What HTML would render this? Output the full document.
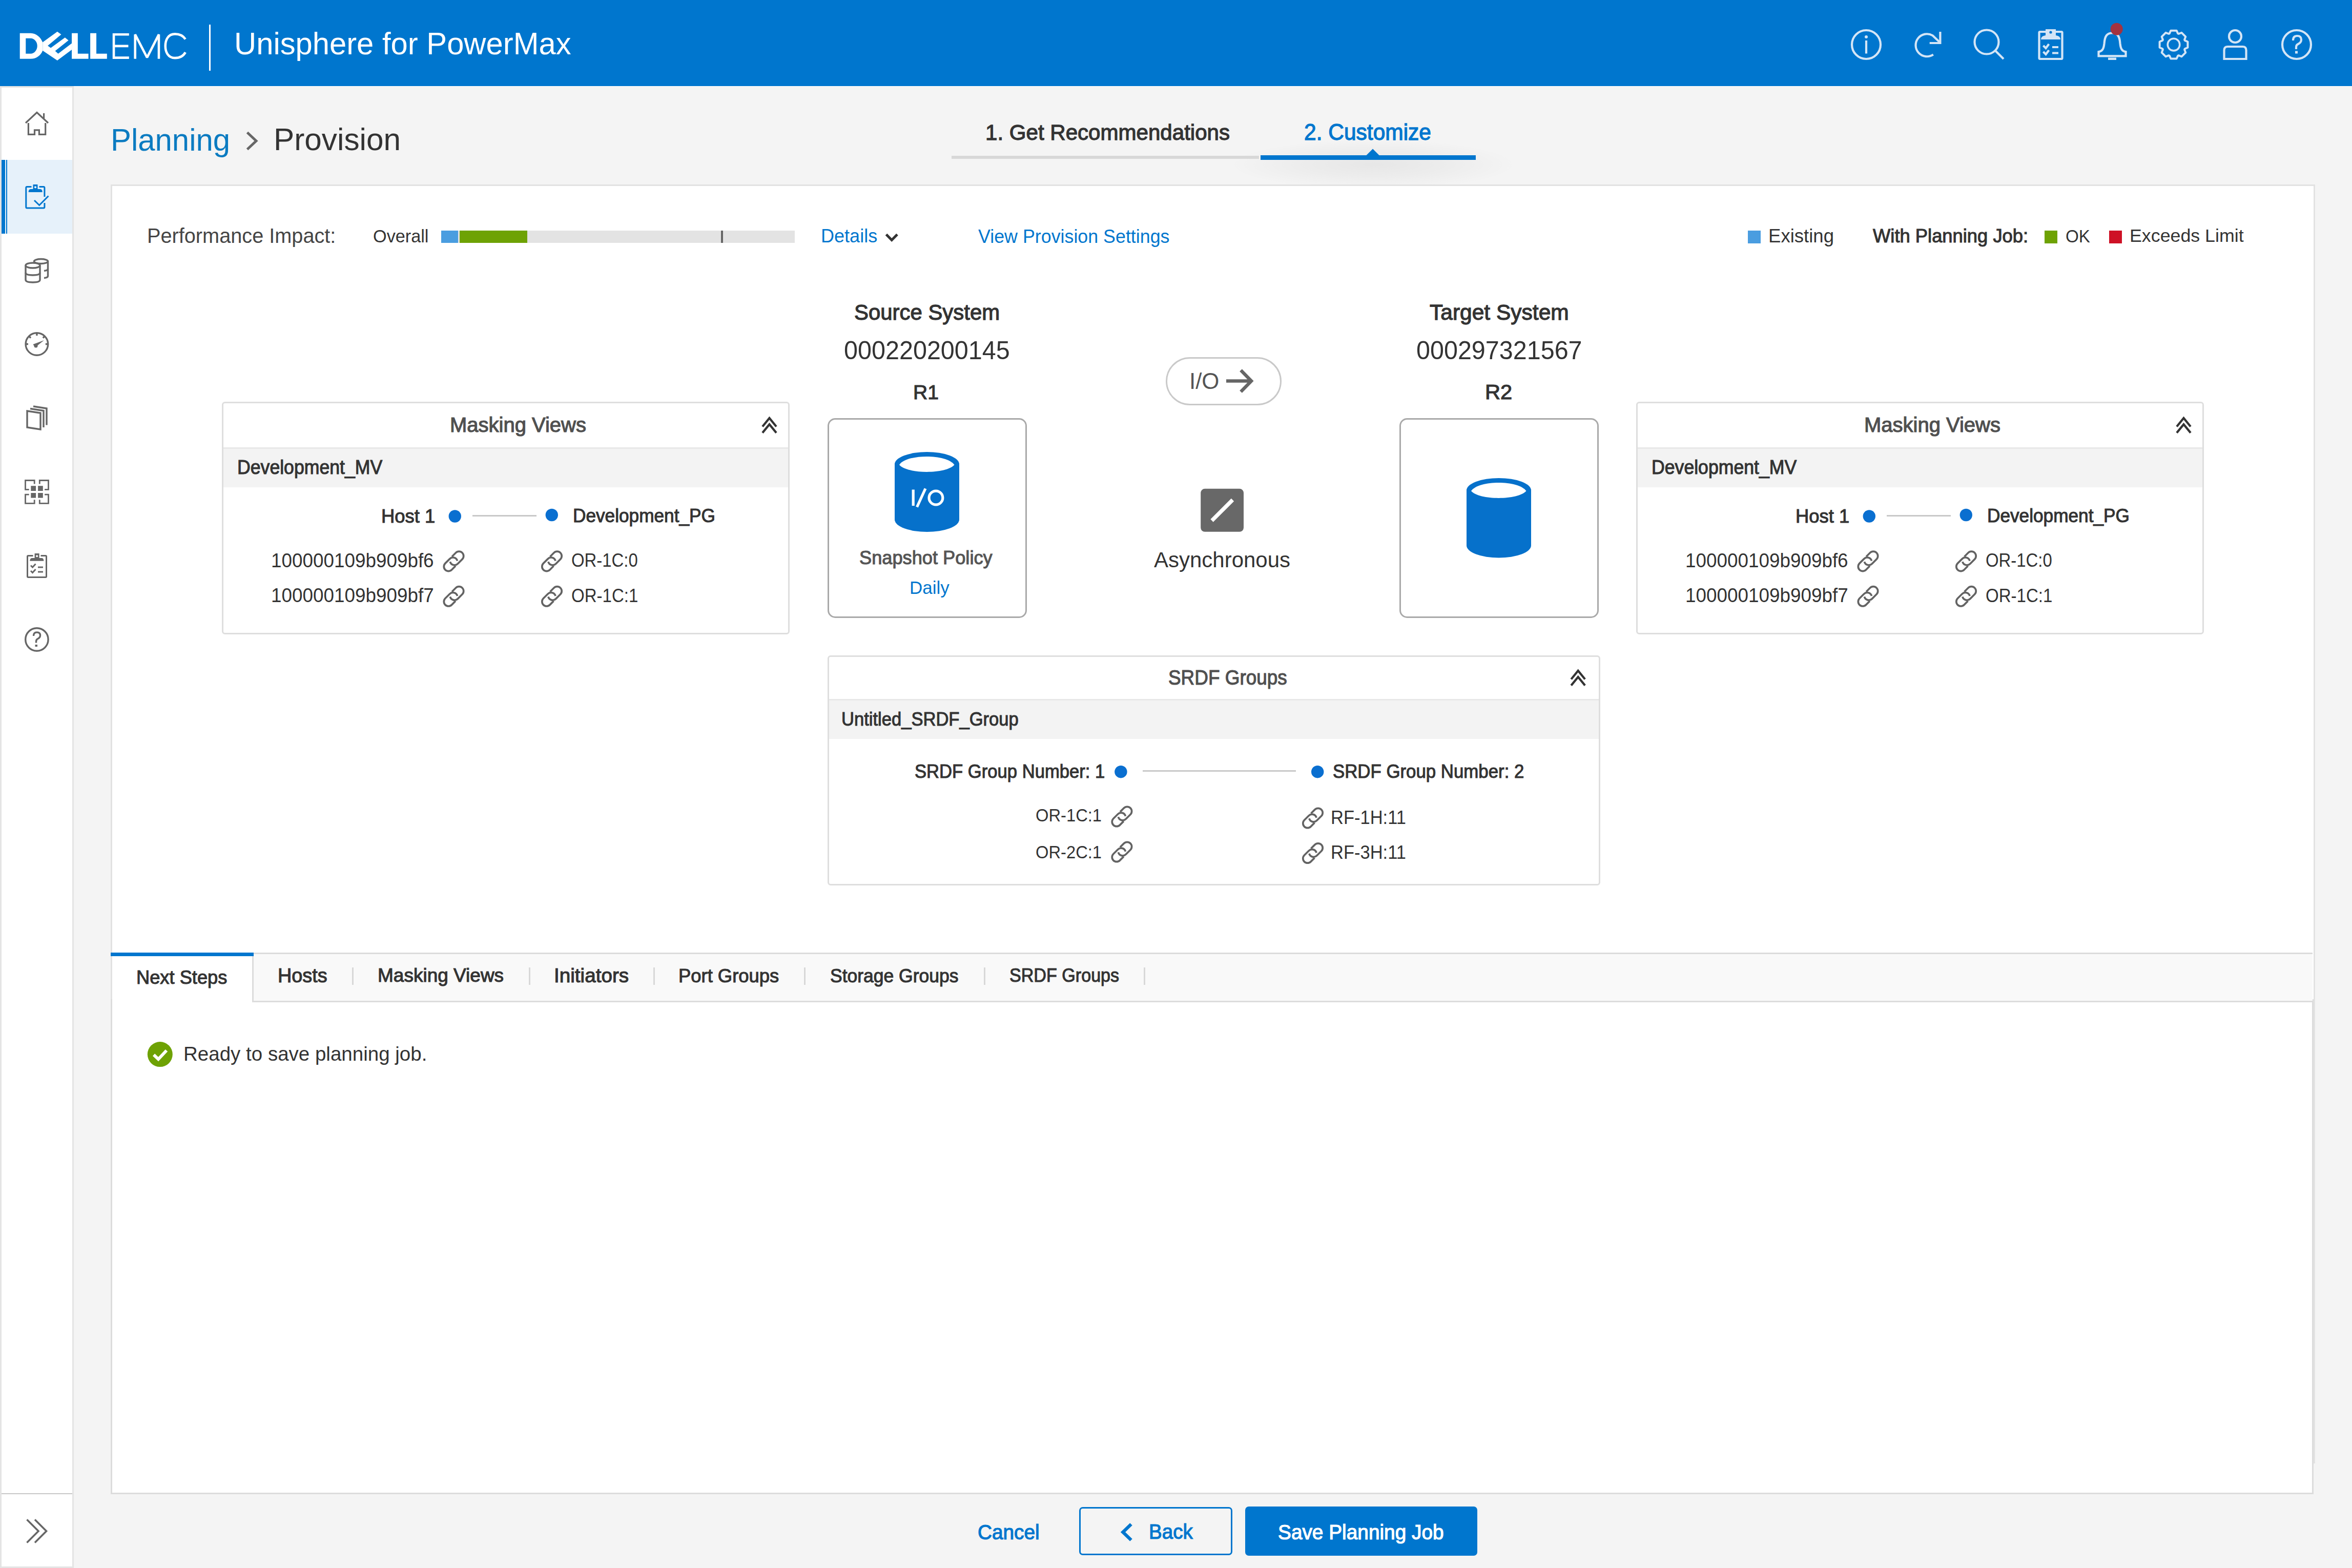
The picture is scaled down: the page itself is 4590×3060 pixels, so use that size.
<!DOCTYPE html>
<html><head><meta charset="utf-8">
<style>
html,body{margin:0;padding:0;}
body{width:4590px;height:3060px;position:relative;overflow:hidden;background:#f4f4f4;font-family:"Liberation Sans",sans-serif;color:#333;}
.a{position:absolute;box-sizing:border-box;}
.t{position:absolute;white-space:nowrap;line-height:1;transform-origin:0 0;}
.b{font-weight:700;}
svg{position:absolute;overflow:visible;}
</style></head><body>
<!-- HEADER -->
<div class="a" style="left:0;top:0;width:4590px;height:168px;background:#0076ce;"></div>
<div class="a" style="left:144px;top:168px;width:4446px;height:1px;background:#fff;"></div>
<svg style="left:0;top:0" width="4590" height="168">
 <g transform="translate(20,40) scale(0.170068)" fill="#fff">
  <path fill-rule="evenodd" d="M110,145 H235 C300,145 350,195 372,250 L372,345 C350,400 300,440 235,440 H110 Z M178,205 V380 H235 C275,380 310,340 310,292 C310,245 275,205 235,205 Z"/>
  <path d="M540,128 L585,160 L430,290 L465,315 L628,195 L668,228 L515,350 L550,380 L706,262 L706,335 L540,458 L372,345 L372,250 Z"/>
  <path d="M706,145 H775 V380 H897 V440 H706 Z"/>
  <path d="M918,145 H988 V380 H1110 V440 H918 Z"/>
 </g>
 <g transform="translate(20,40) scale(0.170068)" fill="none" stroke="#fff" stroke-width="27">
  <path d="M1363,160 H1188 V427 H1363 M1188,293 H1355"/>
  <path d="M1433,440 V160 L1570,425 L1705,160 V440" stroke-linejoin="bevel"/>
  <path d="M2010,215 C1985,175 1945,155 1890,155 C1810,155 1780,225 1780,292 C1780,360 1810,430 1890,430 C1945,430 1985,410 2010,365"/>
 </g>
 <rect x="408" y="48" width="3" height="90" fill="#fff"/>
 <g fill="none" stroke="#d4e5f6" stroke-width="4.2">
  <!-- info -->
  <circle cx="3642" cy="87" r="28"/>
  <line x1="3642" y1="79" x2="3642" y2="104.5"/>
  <!-- refresh -->
  <path d="M3772.8,106.5 A22,22 0 1 1 3771.5,69.2 L3785,82"/>
  <path d="M3786.4,62 V84 H3765.7"/>
  <!-- search -->
  <circle cx="3877" cy="82" r="23.5"/>
  <line x1="3894" y1="99" x2="3910" y2="115"/>
  <!-- clipboard -->
  <path d="M3992,62 H3981 Q3979.5,62 3979.5,63.5 V113 Q3979.5,115 3981,115 H4023 Q4024.5,115 4024.5,113 V63.5 Q4024.5,62 4023,62 H4012"/>
  <path d="M3987.5,89 L3992.5,94 L3998.5,86 M3987.5,101 L3992.5,106 L3998.5,98"/>
  <path d="M4005,92 H4017 M4005,103.5 H4017"/>
  <!-- bell -->
  <path d="M4095.5,109.3 V101 C4103,100 4105.5,95 4106.5,85 C4107.5,70 4112,64.5 4122,64.5 C4132,64.5 4136.5,70 4137.5,85 C4138.5,95 4141,100 4148.5,101 V109.3 Z"/>
  <!-- gear -->
  <circle cx="4242" cy="87.1" r="11.8" stroke-width="3.6"/>
  <!-- user -->
  <circle cx="4362" cy="71" r="12"/>
  <path d="M4340.5,115 V98 Q4340.5,91 4347.5,91 H4376.5 Q4383.5,91 4383.5,98 V115 Z"/>
  <!-- help -->
  <circle cx="4482" cy="87" r="28"/>
  <path d="M4475,79 Q4475,70 4483,70 Q4491,70 4491,77.5 Q4491,83 4484,86.5 Q4481,88 4481,92 V96"/>
 </g>
 <g fill="#d4e5f6">
  <circle cx="3642" cy="72" r="3"/>
  <path d="M3992,57 H4012 V69 Q4021,70 4021,77 H3983 Q3983,70 3992,69 Z"/>
  <rect x="4114" y="112.5" width="16" height="4.5"/>
  <rect x="4479" y="99.5" width="5" height="5"/>
 </g>
 <circle cx="4002" cy="63" r="2.6" fill="#0076ce"/>
 <path fill="none" stroke="#d4e5f6" stroke-width="4" stroke-linejoin="round" d="M4233.8,65.4 L4236.4,59.7 L4247.6,59.7 L4250.2,65.4 L4251.6,66.0 L4257.5,63.8 L4265.3,71.6 L4263.1,77.5 L4263.7,78.9 L4269.4,81.5 L4269.4,92.7 L4263.7,95.3 L4263.1,96.7 L4265.3,102.6 L4257.5,110.4 L4251.6,108.2 L4250.2,108.8 L4247.6,114.5 L4236.4,114.5 L4233.8,108.8 L4232.4,108.2 L4226.5,110.4 L4218.7,102.6 L4220.9,96.7 L4220.3,95.3 L4214.6,92.7 L4214.6,81.5 L4220.3,78.9 L4220.9,77.5 L4218.7,71.6 L4226.5,63.8 L4232.4,66.0 Z"/>
 <circle cx="4130.7" cy="56.8" r="12" fill="#a33340"/>
</svg>
<!-- SIDEBAR -->
<div class="a" style="left:0;top:168px;width:144px;height:2892px;background:#e4e4e4;"></div>
<div class="a" style="left:3px;top:171px;width:138px;height:2886px;background:#fff;"></div>
<div class="a" style="left:3px;top:312px;width:138px;height:144px;background:#e6f1fa;"></div>
<div class="a" style="left:3px;top:312px;width:7px;height:144px;background:#0076ce;"></div>
<div class="a" style="left:12px;top:312px;width:2px;height:144px;background:#0076ce;"></div>
<div class="a" style="left:3px;top:2914px;width:138px;height:2px;background:#c8c8c8;"></div>
<svg style="left:0;top:0" width="144" height="3060">
 <g fill="none" stroke="#666" stroke-width="3.2">
  <!-- home -->
  <path d="M50,240 L72,219.5 L94,240"/>
  <path d="M85.6,221 V231"/>
  <path d="M55.4,240 V262.3 H67.5 V253.8 H76.4 V262.3 H88.7 V240"/>
 </g>
 <!-- planning active -->
 <g fill="none" stroke="#0076ce" stroke-width="3">
  <path d="M61.5,364.5 H52.5 Q50.8,364.5 50.8,366.5 V404 Q50.8,406 52.5,406 H85 Q86.9,406 86.9,404 V396"/>
  <path d="M76.5,364.5 H85 Q86.9,364.5 86.9,366.5 V384"/>
  <path d="M67,391 L76.7,400.5 L94.5,382.5"/>
 </g>
 <g fill="#0076ce">
  <path d="M64.5,360 H73.5 V369 H78.5 Q82.7,369 82.7,375 H55.6 Q55.6,369 60,369 H64.5 Z"/>
 </g>
 <circle cx="69" cy="365.3" r="2.1" fill="#e6f1fa"/>
 <g fill="none" stroke="#666" stroke-width="3.4">
  <!-- db -->
  <ellipse cx="80" cy="510" rx="13.5" ry="4.5"/>
  <path d="M93.5,510 V538.5 Q93.5,542 86,542.5"/>
  <path d="M93.5,524.5 Q93.5,528 86,528.5"/>
  <ellipse cx="64" cy="518" rx="14" ry="5" fill="#fff"/>
  <path d="M50,518 V546 Q50,551 64,551 Q78,551 78,546 V518"/>
  <path d="M50,532 Q50,537 64,537 Q78,537 78,532"/>
  <!-- gauge -->
  <circle cx="71.9" cy="671.5" r="21.8"/>
  <path d="M71.9,650 V655 M50,671.5 H55 M93.8,671.5 H88.8 M56.5,656 L60,659.5 M87.3,656 L83.8,659.5"/>
  <!-- docs -->
  <path d="M53,802 L79,806 V838 L53,834 Z"/>
  <path d="M59,797.5 L85,801.5 V834"/>
  <path d="M65,793 L91,797 V829.5"/>
</g>
 <path d="M64.5,672 L86,664 L68.5,678 Z" fill="#666"/>
 <circle cx="70" cy="675" r="3.5" fill="#666"/>
<g fill="none" stroke="#666" stroke-width="2.8">
  <path d="M67.2,944.6 V937.5 H49.5 V955.4 H56.7 M77.3,944.6 V937.5 H94.5 V955.4 H87.1 M56.7,965.2 H49.5 V982.4 H67.2 V975.2 M87.1,965.2 H94.5 V982.4 H77.3 V975.2"/>
 </g>
 <g fill="#666">
  <rect x="60.3" y="948.2" width="9.8" height="9.8"/><rect x="74.1" y="948.2" width="9.7" height="9.8"/>
  <rect x="60.3" y="962" width="9.8" height="9.6"/><rect x="74.1" y="962" width="9.7" height="9.6"/>
 </g>
 <!-- checklist clipboard -->
 <g fill="none" stroke="#666" stroke-width="3">
  <path d="M64.5,1084.5 H55 Q53.5,1084.5 53.5,1086 V1125 Q53.5,1126.5 55,1126.5 H89 Q90.5,1126.5 90.5,1125 V1086 Q90.5,1084.5 89,1084.5 H79.5"/>
  <path d="M60,1103.5 L63.5,1107 L69.5,1100.5 M60,1114 L63.5,1117.5 L69.5,1111"/>
  <path d="M74,1107 H84 M74,1116 H84"/>
 </g>
 <path fill="#666" d="M67.6,1080 H76.6 V1089 H81 Q85.4,1089 85.4,1094.7 H58.3 Q58.3,1089 63,1089 H67.6 Z"/>
 <circle cx="72.1" cy="1085.2" r="2" fill="#fff"/>
 <!-- help -->
 <g fill="none" stroke="#666" stroke-width="3.4">
  <circle cx="71.9" cy="1248" r="22.2"/>
  <path d="M65.5,1241 Q65.5,1234 72,1234 Q78.5,1234 78.5,1240 Q78.5,1244.5 73,1247 Q70.5,1248.5 70.5,1252 V1254.5"/>
 </g>
 <rect x="68.5" y="1258" width="4.5" height="4" fill="#666"/>
 <!-- expand -->
 <g fill="none" stroke="#666" stroke-width="3.6">
  <path d="M52.5,2965.5 L75,2988 L52.5,3010.5 M68,2965.5 L90.5,2988 L68,3010.5"/>
 </g>
</svg>
<!-- BREADCRUMB / STEPS -->
<svg style="left:0;top:0" width="4590" height="400">
 <path d="M482.5,258.5 L500,275 L482.5,291.5" fill="none" stroke="#666" stroke-width="5"/>
</svg>
<div class="a" style="left:2400px;top:262px;width:560px;height:98px;background:radial-gradient(ellipse 50% 50% at 50% 60%, rgba(0,0,0,0.055) 0%, rgba(0,0,0,0.03) 50%, rgba(0,0,0,0) 100%);"></div>
<div class="a" style="left:1857px;top:304px;width:600px;height:6px;background:#d8d8d8;"></div>
<div class="a" style="left:2460px;top:303px;width:420px;height:9px;background:#0076ce;"></div>
<svg style="left:0;top:0" width="4590" height="400"><path d="M2666,303.5 L2679,290.5 L2692,303.5 Z" fill="#0076ce"/></svg>

<!-- MAIN PANEL -->
<div class="a" style="left:216px;top:360px;width:4302px;height:2496px;background:#fff;border:3px solid #e2e2e2;"></div>
<div class="a" style="left:216px;top:1950px;width:4299px;height:966px;background:#fff;border:3px solid #dcdcdc;border-top:none;"></div>

<!-- PERF ROW -->
<div class="a" style="left:861px;top:450px;width:690px;height:24px;background:#e3e3e3;"></div>
<div class="a" style="left:861px;top:450px;width:33px;height:24px;background:#4a9de0;"></div>
<div class="a" style="left:897px;top:450px;width:132px;height:24px;background:#6ea204;"></div>
<div class="a" style="left:1407px;top:450px;width:3.5px;height:24px;background:#666;"></div>
<svg style="left:0;top:0" width="4590" height="600">
 <path d="M1729.5,457.5 L1740.2,468.5 L1751,457.5" fill="none" stroke="#333" stroke-width="5"/>
</svg>
<div class="a" style="left:3411px;top:450px;width:24.5px;height:24.5px;background:#4a9de0;"></div>
<div class="a" style="left:3990px;top:450px;width:24.5px;height:24.5px;background:#6ea204;"></div>
<div class="a" style="left:4116px;top:450px;width:24.5px;height:24.5px;background:#ce1126;"></div>

<!-- I/O PILL -->
<div class="a" style="left:2274.5px;top:696.5px;width:226.5px;height:94px;border:3.5px solid #c9c9c9;border-radius:47px;background:#fff;"></div>
<svg style="left:0;top:0" width="4590" height="1300">
 <path d="M2393,743.5 H2438 M2421.5,722.5 L2442,743.5 L2421.5,764.5" fill="none" stroke="#666" stroke-width="6.5"/>
</svg>

<!-- SOURCE / TARGET BOXES -->
<div class="a" style="left:1614.5px;top:816px;width:389.5px;height:389.5px;border:3.5px solid #a9a9a9;border-radius:15px;background:#fff;"></div>
<div class="a" style="left:2730.5px;top:816px;width:389.5px;height:389.5px;border:3.5px solid #a9a9a9;border-radius:15px;background:#fff;"></div>
<svg style="left:0;top:0" width="4590" height="1300">
 <g fill="#0671cb">
  <path d="M1746,906 A63,24 0 0 1 1872,906 V1014 A63,24 0 0 1 1746,1014 Z"/>
  <path d="M2862,957 A63,24 0 0 1 2988,957 V1064.5 A63,24 0 0 1 2862,1064.5 Z"/>
 </g>
 <g fill="#fff">
  <path d="M1755,907 C1770,885.5 1847,885.5 1862.5,907 C1847,925.5 1770,925.5 1755,907 Z"/>
  <path d="M2871,958 C2886,936.5 2963,936.5 2978.5,958 C2963,976.5 2886,976.5 2871,958 Z"/>
 </g>
 <g stroke="#fff" stroke-width="5.2" fill="none">
  <line x1="1782.2" y1="955.5" x2="1782.2" y2="987"/>
  <line x1="1789.5" y1="989.5" x2="1806" y2="953.5"/>
  <circle cx="1826.4" cy="971.5" r="13.4"/>
 </g>
 <!-- async -->
 <rect x="2343.2" y="953.8" width="83.8" height="84" rx="8" fill="#686868"/>
 <path d="M2365,1016 L2405.5,975.5" stroke="#fff" stroke-width="7.5"/>
</svg>
<div class="a" style="left:433px;top:783.5px;width:1108px;height:454.5px;border:3px solid #dedede;border-radius:6px;background:#fff;"></div>
<div class="a" style="left:436px;top:873px;width:1102px;height:3px;background:#e8e8e8;"></div>
<div class="a" style="left:436px;top:876px;width:1102px;height:74.5px;background:#f3f3f3;"></div>
<div class="a" style="left:921.7px;top:1004.5px;width:125px;height:3px;background:#c9c9c9;"></div>
<div class="a" style="left:3193px;top:783.5px;width:1108px;height:454.5px;border:3px solid #dedede;border-radius:6px;background:#fff;"></div>
<div class="a" style="left:3196px;top:873px;width:1102px;height:3px;background:#e8e8e8;"></div>
<div class="a" style="left:3196px;top:876px;width:1102px;height:74.5px;background:#f3f3f3;"></div>
<div class="a" style="left:3681.7px;top:1004.5px;width:125px;height:3px;background:#c9c9c9;"></div>
<div class="a" style="left:1615px;top:1278.5px;width:1508px;height:449px;border:3px solid #dedede;border-radius:6px;background:#fff;"></div>
<div class="a" style="left:1618px;top:1364px;width:1502px;height:3px;background:#e8e8e8;"></div>
<div class="a" style="left:1618px;top:1367px;width:1502px;height:75px;background:#f3f3f3;"></div>
<div class="a" style="left:2230px;top:1503px;width:299px;height:3px;background:#c9c9c9;"></div>
<div class="a" style="left:219px;top:1859px;width:4294px;height:97px;background:#f9f9f9;border-top:3px solid #dcdcdc;border-bottom:3px solid #dcdcdc;"></div>
<div class="a" style="left:219px;top:1859px;width:276px;height:97px;background:#fff;border-right:3px solid #dcdcdc;"></div>
<div class="a" style="left:216px;top:1859px;width:279px;height:7px;background:#0076ce;"></div>
<div class="a" style="left:687.3px;top:1888px;width:3px;height:34px;background:#d8d8d8;"></div>
<div class="a" style="left:1032.0px;top:1888px;width:3px;height:34px;background:#d8d8d8;"></div>
<div class="a" style="left:1275.2px;top:1888px;width:3px;height:34px;background:#d8d8d8;"></div>
<div class="a" style="left:1568.5px;top:1888px;width:3px;height:34px;background:#d8d8d8;"></div>
<div class="a" style="left:1919.5px;top:1888px;width:3px;height:34px;background:#d8d8d8;"></div>
<div class="a" style="left:2232.0px;top:1888px;width:3px;height:34px;background:#d8d8d8;"></div>
<div class="a" style="left:2106.3px;top:2940.7px;width:299px;height:94.5px;border:3.5px solid #0076ce;border-radius:7px;"></div>
<div class="a" style="left:2430.4px;top:2939.8px;width:452.4px;height:96px;background:#0076ce;border-radius:7px;"></div>
<svg style="left:0;top:0" width="4590" height="3060">
<path d="M1488.0,832.5 L1501.5,816 L1515.0,832.5 M1488.0,844.6 L1501.5,828.1 L1515.0,844.6" fill="none" stroke="#333" stroke-width="4.3"/>
<circle cx="887.8" cy="1007.5" r="12.2" fill="#0a6fd0"/>
<circle cx="1076.8" cy="1005" r="12.2" fill="#0a6fd0"/>
<g transform="translate(864.5,1074.4) scale(1.000)"><path d="M17.5,11.9 L25,4.4 A8.9,8.9 0 0 1 37.6,17 L28.8,25.8 A8.9,8.9 0 0 1 13.9,21.8 M24.5,30.1 L17,37.6 A8.9,8.9 0 0 1 4.4,25 L13.2,16.2 A8.9,8.9 0 0 1 28.1,20.2" fill="none" stroke="#636363" stroke-width="3.7"/></g>
<g transform="translate(1056,1074.4) scale(1.000)"><path d="M17.5,11.9 L25,4.4 A8.9,8.9 0 0 1 37.6,17 L28.8,25.8 A8.9,8.9 0 0 1 13.9,21.8 M24.5,30.1 L17,37.6 A8.9,8.9 0 0 1 4.4,25 L13.2,16.2 A8.9,8.9 0 0 1 28.1,20.2" fill="none" stroke="#636363" stroke-width="3.7"/></g>
<g transform="translate(864.5,1142.8) scale(1.000)"><path d="M17.5,11.9 L25,4.4 A8.9,8.9 0 0 1 37.6,17 L28.8,25.8 A8.9,8.9 0 0 1 13.9,21.8 M24.5,30.1 L17,37.6 A8.9,8.9 0 0 1 4.4,25 L13.2,16.2 A8.9,8.9 0 0 1 28.1,20.2" fill="none" stroke="#636363" stroke-width="3.7"/></g>
<g transform="translate(1056,1142.8) scale(1.000)"><path d="M17.5,11.9 L25,4.4 A8.9,8.9 0 0 1 37.6,17 L28.8,25.8 A8.9,8.9 0 0 1 13.9,21.8 M24.5,30.1 L17,37.6 A8.9,8.9 0 0 1 4.4,25 L13.2,16.2 A8.9,8.9 0 0 1 28.1,20.2" fill="none" stroke="#636363" stroke-width="3.7"/></g>
<path d="M4248.0,832.5 L4261.5,816 L4275.0,832.5 M4248.0,844.6 L4261.5,828.1 L4275.0,844.6" fill="none" stroke="#333" stroke-width="4.3"/>
<circle cx="3647.8" cy="1007.5" r="12.2" fill="#0a6fd0"/>
<circle cx="3836.8" cy="1005" r="12.2" fill="#0a6fd0"/>
<g transform="translate(3624.5,1074.4) scale(1.000)"><path d="M17.5,11.9 L25,4.4 A8.9,8.9 0 0 1 37.6,17 L28.8,25.8 A8.9,8.9 0 0 1 13.9,21.8 M24.5,30.1 L17,37.6 A8.9,8.9 0 0 1 4.4,25 L13.2,16.2 A8.9,8.9 0 0 1 28.1,20.2" fill="none" stroke="#636363" stroke-width="3.7"/></g>
<g transform="translate(3816,1074.4) scale(1.000)"><path d="M17.5,11.9 L25,4.4 A8.9,8.9 0 0 1 37.6,17 L28.8,25.8 A8.9,8.9 0 0 1 13.9,21.8 M24.5,30.1 L17,37.6 A8.9,8.9 0 0 1 4.4,25 L13.2,16.2 A8.9,8.9 0 0 1 28.1,20.2" fill="none" stroke="#636363" stroke-width="3.7"/></g>
<g transform="translate(3624.5,1142.8) scale(1.000)"><path d="M17.5,11.9 L25,4.4 A8.9,8.9 0 0 1 37.6,17 L28.8,25.8 A8.9,8.9 0 0 1 13.9,21.8 M24.5,30.1 L17,37.6 A8.9,8.9 0 0 1 4.4,25 L13.2,16.2 A8.9,8.9 0 0 1 28.1,20.2" fill="none" stroke="#636363" stroke-width="3.7"/></g>
<g transform="translate(3816,1142.8) scale(1.000)"><path d="M17.5,11.9 L25,4.4 A8.9,8.9 0 0 1 37.6,17 L28.8,25.8 A8.9,8.9 0 0 1 13.9,21.8 M24.5,30.1 L17,37.6 A8.9,8.9 0 0 1 4.4,25 L13.2,16.2 A8.9,8.9 0 0 1 28.1,20.2" fill="none" stroke="#636363" stroke-width="3.7"/></g>
<path d="M3066.2,1325.5 L3079.7,1309 L3093.2,1325.5 M3066.2,1337.6 L3079.7,1321.1 L3093.2,1337.6" fill="none" stroke="#333" stroke-width="4.3"/>
<circle cx="2187.4" cy="1506.2" r="12.2" fill="#0a6fd0"/>
<circle cx="2571.2" cy="1506.2" r="12.2" fill="#0a6fd0"/>
<g transform="translate(2168.4,1572.5) scale(1.000)"><path d="M17.5,11.9 L25,4.4 A8.9,8.9 0 0 1 37.6,17 L28.8,25.8 A8.9,8.9 0 0 1 13.9,21.8 M24.5,30.1 L17,37.6 A8.9,8.9 0 0 1 4.4,25 L13.2,16.2 A8.9,8.9 0 0 1 28.1,20.2" fill="none" stroke="#636363" stroke-width="3.7"/></g>
<g transform="translate(2168.4,1641.5) scale(1.000)"><path d="M17.5,11.9 L25,4.4 A8.9,8.9 0 0 1 37.6,17 L28.8,25.8 A8.9,8.9 0 0 1 13.9,21.8 M24.5,30.1 L17,37.6 A8.9,8.9 0 0 1 4.4,25 L13.2,16.2 A8.9,8.9 0 0 1 28.1,20.2" fill="none" stroke="#636363" stroke-width="3.7"/></g>
<g transform="translate(2541,1575.5) scale(1.000)"><path d="M17.5,11.9 L25,4.4 A8.9,8.9 0 0 1 37.6,17 L28.8,25.8 A8.9,8.9 0 0 1 13.9,21.8 M24.5,30.1 L17,37.6 A8.9,8.9 0 0 1 4.4,25 L13.2,16.2 A8.9,8.9 0 0 1 28.1,20.2" fill="none" stroke="#636363" stroke-width="3.7"/></g>
<g transform="translate(2541,1644) scale(1.000)"><path d="M17.5,11.9 L25,4.4 A8.9,8.9 0 0 1 37.6,17 L28.8,25.8 A8.9,8.9 0 0 1 13.9,21.8 M24.5,30.1 L17,37.6 A8.9,8.9 0 0 1 4.4,25 L13.2,16.2 A8.9,8.9 0 0 1 28.1,20.2" fill="none" stroke="#636363" stroke-width="3.7"/></g>
</svg>
<svg style="left:0;top:0" width="4590" height="3060">
<circle cx="312.3" cy="2057.6" r="24.5" fill="#6ea204"/>
<path d="M300,2058.5 L309,2067 L325,2050" fill="none" stroke="#fff" stroke-width="6"/>
<path d="M2207.5,2974.5 L2191.5,2990 L2207.5,3005.5" fill="none" stroke="#0076ce" stroke-width="6.5"/>
</svg>
<div class="t" style="left:457.2px;top:55.0px;font-size:61.2px;transform:scaleX(0.9765);color:#fff;">Unisphere for PowerMax</div>
<div class="t" style="left:215.5px;top:241.6px;font-size:61.6px;transform:scaleX(0.9722);color:#0b7bc1;">Planning</div>
<div class="t" style="left:533.8px;top:241.4px;font-size:61.8px;transform:scaleX(0.9759);color:#333;">Provision</div>
<div class="t" style="left:1922.7px;top:236.7px;font-size:43.3px;transform:scaleX(0.9716);color:#333;-webkit-text-stroke:1.30px #333;">1. Get Recommendations</div>
<div class="t" style="left:2544.5px;top:236.5px;font-size:43.5px;transform:scaleX(0.9770);color:#0076ce;-webkit-text-stroke:1.30px #0076ce;">2. Customize</div>
<div class="t" style="left:287.2px;top:440.1px;font-size:40.0px;transform:scaleX(0.9922);color:#454545;">Performance Impact:</div>
<div class="t" style="left:727.8px;top:443.8px;font-size:35.6px;transform:scaleX(0.9625);color:#333;">Overall</div>
<div class="t" style="left:1601.6px;top:442.9px;font-size:36.5px;transform:scaleX(0.9879);color:#0076ce;">Details</div>
<div class="t" style="left:1908.9px;top:442.7px;font-size:37.3px;transform:scaleX(0.9600);color:#0076ce;">View Provision Settings</div>
<div class="t" style="left:3451.1px;top:442.6px;font-size:36.2px;transform:scaleX(1.0104);color:#333;">Existing</div>
<div class="t" style="left:3654.7px;top:442.6px;font-size:36.1px;transform:scaleX(1.0077);color:#333;-webkit-text-stroke:1.08px #333;">With Planning Job:</div>
<div class="t" style="left:4031.2px;top:443.9px;font-size:34.5px;transform:scaleX(0.9633);color:#333;">OK</div>
<div class="t" style="left:4156.1px;top:442.9px;font-size:35.8px;transform:scaleX(0.9992);color:#333;">Exceeds Limit</div>
<div class="t" style="left:1667.1px;top:588.8px;font-size:42.1px;transform:scaleX(0.9954);color:#333;-webkit-text-stroke:1.26px #333;">Source System</div>
<div class="t" style="left:1647.3px;top:660.3px;font-size:49.6px;transform:scaleX(0.9782);color:#333;">000220200145</div>
<div class="t" style="left:1781.9px;top:745.8px;font-size:39.7px;transform:scaleX(0.9827);color:#333;-webkit-text-stroke:1.19px #333;">R1</div>
<div class="t" style="left:2320.7px;top:722.1px;font-size:44.6px;transform:scaleX(0.9836);color:#555;">I/O</div>
<div class="t" style="left:2789.6px;top:588.5px;font-size:42.4px;transform:scaleX(1.0029);color:#333;-webkit-text-stroke:1.27px #333;">Target System</div>
<div class="t" style="left:2763.5px;top:660.3px;font-size:49.6px;transform:scaleX(0.9776);color:#333;">000297321567</div>
<div class="t" style="left:2897.7px;top:744.7px;font-size:41.0px;transform:scaleX(1.0149);color:#333;-webkit-text-stroke:1.23px #333;">R2</div>
<div class="t" style="left:1677.0px;top:1069.5px;font-size:37.5px;transform:scaleX(0.9655);color:#555;-webkit-text-stroke:1.13px #555;">Snapshot Policy</div>
<div class="t" style="left:1775.2px;top:1129.8px;font-size:35.9px;transform:scaleX(0.9748);color:#0076ce;">Daily</div>
<div class="t" style="left:2252.2px;top:1070.6px;font-size:42.6px;transform:scaleX(0.9857);color:#333;">Asynchronous</div>
<div class="t" style="left:878.3px;top:809.0px;font-size:40.8px;transform:scaleX(0.9802);color:#505050;-webkit-text-stroke:1.22px #505050;">Masking Views</div>
<div class="t" style="left:463.1px;top:892.6px;font-size:38.1px;transform:scaleX(0.9360);color:#333;-webkit-text-stroke:1.14px #333;">Development_MV</div>
<div class="t" style="left:744.1px;top:988.8px;font-size:37.5px;transform:scaleX(0.9708);color:#333;-webkit-text-stroke:1.12px #333;">Host 1</div>
<div class="t" style="left:1117.6px;top:989.3px;font-size:36.9px;transform:scaleX(0.9545);color:#333;-webkit-text-stroke:1.11px #333;">Development_PG</div>
<div class="t" style="left:528.9px;top:1074.7px;font-size:38.0px;transform:scaleX(0.9696);color:#333;">100000109b909bf6</div>
<div class="t" style="left:528.9px;top:1143.4px;font-size:38.0px;transform:scaleX(0.9702);color:#333;">100000109b909bf7</div>
<div class="t" style="left:1115.3px;top:1076.4px;font-size:36.0px;transform:scaleX(0.9139);color:#333;">OR-1C:0</div>
<div class="t" style="left:1115.3px;top:1145.0px;font-size:36.1px;transform:scaleX(0.9152);color:#333;">OR-1C:1</div>
<div class="t" style="left:3638.3px;top:809.0px;font-size:40.8px;transform:scaleX(0.9802);color:#505050;-webkit-text-stroke:1.22px #505050;">Masking Views</div>
<div class="t" style="left:3223.1px;top:892.6px;font-size:38.1px;transform:scaleX(0.9360);color:#333;-webkit-text-stroke:1.14px #333;">Development_MV</div>
<div class="t" style="left:3504.1px;top:988.8px;font-size:37.5px;transform:scaleX(0.9708);color:#333;-webkit-text-stroke:1.12px #333;">Host 1</div>
<div class="t" style="left:3877.6px;top:989.3px;font-size:36.9px;transform:scaleX(0.9545);color:#333;-webkit-text-stroke:1.11px #333;">Development_PG</div>
<div class="t" style="left:3288.9px;top:1074.7px;font-size:38.0px;transform:scaleX(0.9696);color:#333;">100000109b909bf6</div>
<div class="t" style="left:3288.9px;top:1143.4px;font-size:38.0px;transform:scaleX(0.9702);color:#333;">100000109b909bf7</div>
<div class="t" style="left:3875.3px;top:1076.4px;font-size:36.0px;transform:scaleX(0.9139);color:#333;">OR-1C:0</div>
<div class="t" style="left:3875.3px;top:1145.0px;font-size:36.1px;transform:scaleX(0.9152);color:#333;">OR-1C:1</div>
<div class="t" style="left:2279.5px;top:1302.7px;font-size:39.9px;transform:scaleX(0.9252);color:#505050;-webkit-text-stroke:1.20px #505050;">SRDF Groups</div>
<div class="t" style="left:1642.1px;top:1385.1px;font-size:37.6px;transform:scaleX(0.9196);color:#333;-webkit-text-stroke:1.13px #333;">Untitled_SRDF_Group</div>
<div class="t" style="left:1785.2px;top:1486.9px;font-size:37.4px;transform:scaleX(0.9258);color:#333;-webkit-text-stroke:1.12px #333;">SRDF Group Number: 1</div>
<div class="t" style="left:2600.6px;top:1486.9px;font-size:37.5px;transform:scaleX(0.9283);color:#333;-webkit-text-stroke:1.12px #333;">SRDF Group Number: 2</div>
<div class="t" style="left:2021.1px;top:1574.4px;font-size:35.9px;transform:scaleX(0.9113);color:#333;">OR-1C:1</div>
<div class="t" style="left:2021.1px;top:1646.4px;font-size:35.9px;transform:scaleX(0.9113);color:#333;">OR-2C:1</div>
<div class="t" style="left:2597.2px;top:1576.8px;font-size:37.1px;transform:scaleX(0.9304);color:#333;">RF-1H:11</div>
<div class="t" style="left:2597.2px;top:1645.7px;font-size:36.8px;transform:scaleX(0.9377);color:#333;">RF-3H:11</div>
<div class="t" style="left:265.9px;top:1888.8px;font-size:37.4px;transform:scaleX(0.9698);color:#333;-webkit-text-stroke:1.12px #333;">Next Steps</div>
<div class="t" style="left:541.7px;top:1884.8px;font-size:38.2px;transform:scaleX(0.9909);color:#333;-webkit-text-stroke:1.15px #333;">Hosts</div>
<div class="t" style="left:737.2px;top:1885.2px;font-size:37.8px;transform:scaleX(0.9790);color:#333;-webkit-text-stroke:1.13px #333;">Masking Views</div>
<div class="t" style="left:1080.5px;top:1884.5px;font-size:38.6px;transform:scaleX(1.0022);color:#333;-webkit-text-stroke:1.16px #333;">Initiators</div>
<div class="t" style="left:1324.1px;top:1885.5px;font-size:37.5px;transform:scaleX(0.9707);color:#333;-webkit-text-stroke:1.12px #333;">Port Groups</div>
<div class="t" style="left:1620.0px;top:1885.8px;font-size:37.0px;transform:scaleX(0.9589);color:#333;-webkit-text-stroke:1.11px #333;">Storage Groups</div>
<div class="t" style="left:1969.6px;top:1886.4px;font-size:36.3px;transform:scaleX(0.9394);color:#333;-webkit-text-stroke:1.09px #333;">SRDF Groups</div>
<div class="t" style="left:358.3px;top:2036.5px;font-size:39.7px;transform:scaleX(0.9706);color:#333;">Ready to save planning job.</div>
<div class="t" style="left:1907.6px;top:2969.7px;font-size:40.4px;transform:scaleX(0.9595);color:#0076ce;-webkit-text-stroke:1.21px #0076ce;">Cancel</div>
<div class="t" style="left:2241.6px;top:2969.7px;font-size:40.3px;transform:scaleX(0.9574);color:#0076ce;-webkit-text-stroke:1.21px #0076ce;">Back</div>
<div class="t" style="left:2493.8px;top:2969.6px;font-size:40.4px;transform:scaleX(0.9608);color:#fff;-webkit-text-stroke:1.21px #fff;">Save Planning Job</div>
</body></html>
